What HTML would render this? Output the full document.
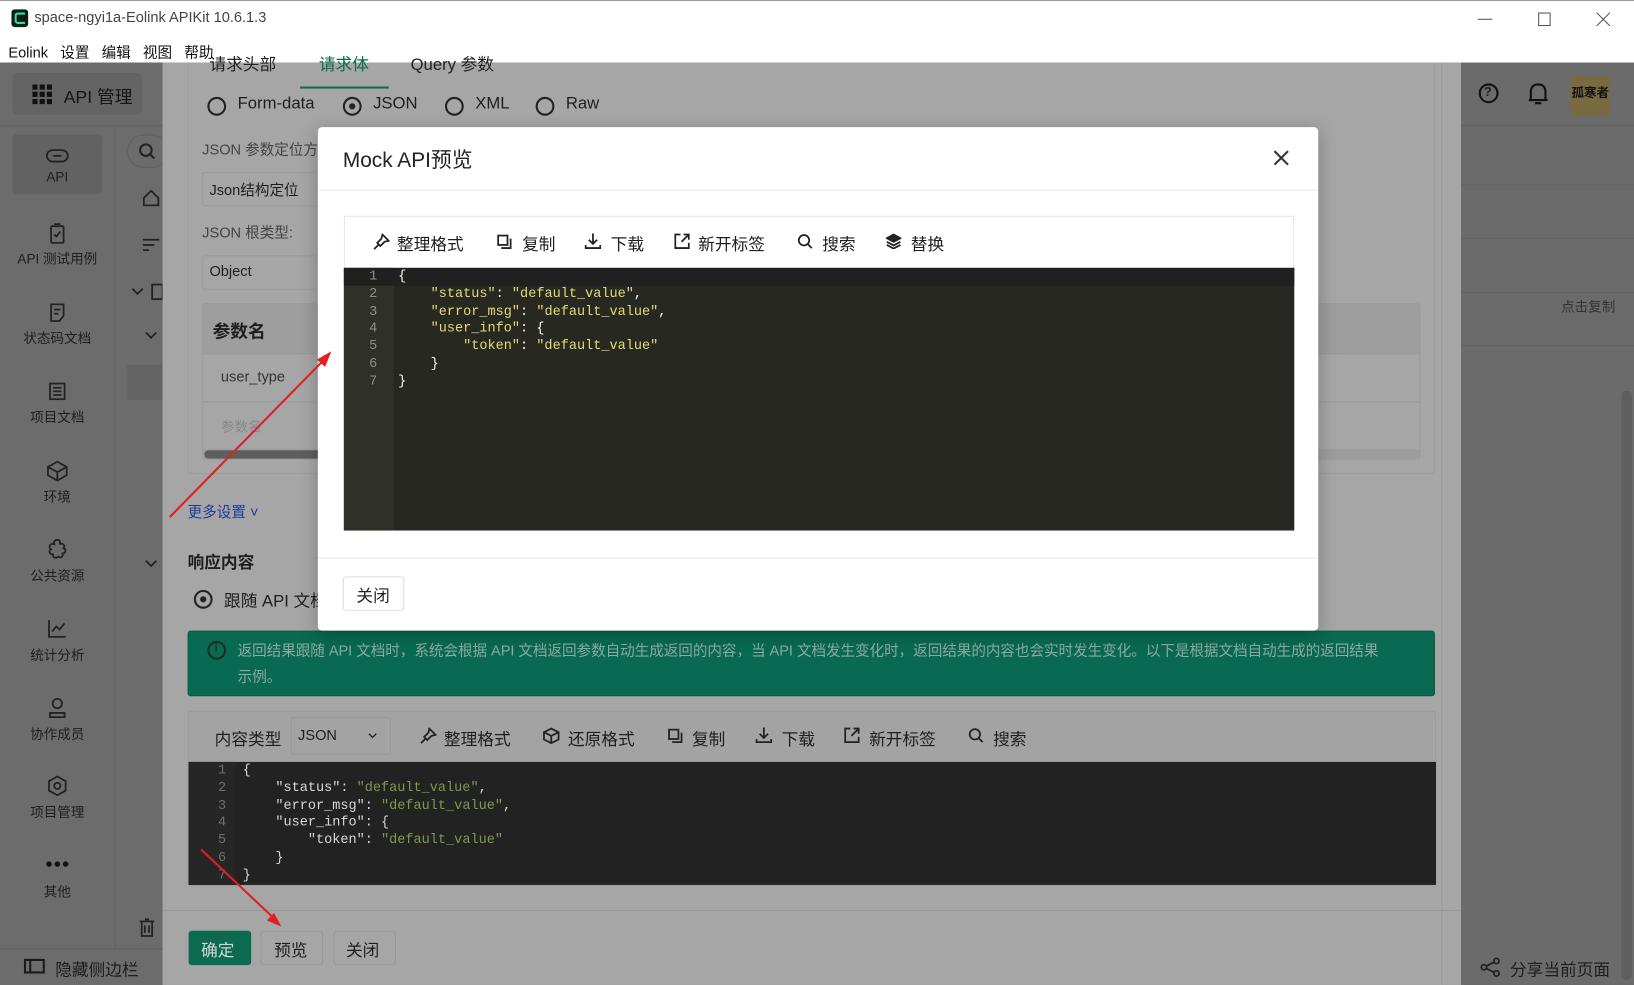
<!DOCTYPE html>
<html><head><meta charset="utf-8">
<style>
*{box-sizing:border-box;margin:0;padding:0}
html,body{width:1634px;height:985px;overflow:hidden;background:#6b6b6b}
#w{position:absolute;left:0;top:0;width:1568px;height:945px;transform:scale(1.0421,1.0423);transform-origin:0 0;font-family:"Liberation Sans","Noto Sans CJK SC",sans-serif;color:#1e1e1e;background:#6b6b6b}
.a{position:absolute}
.t{position:absolute;white-space:nowrap}
.mono{font-family:"Liberation Mono","DejaVu Sans Mono",monospace;font-size:13px;line-height:16.8px}
svg.i{position:absolute;fill:none;stroke:#222;stroke-width:1.7}
</style></head><body><div id="w">
<!-- title bar -->
<div class="a" style="left:0;top:0;width:1568px;height:60px;background:#fff;border-top:1px solid #999"></div>
<div class="a" style="left:11px;top:9px;width:16px;height:17px;border-radius:3px;background:#0c1f17"><div class="a" style="left:3px;top:3px;width:10px;height:11px;border:2px solid #2fe0a0;border-right:none;border-radius:3px 0 0 3px"></div></div>
<div class="t" style="left:33px;top:8px;font-size:14px;color:#444">space-ngyi1a-Eolink APIKit 10.6.1.3</div>
<div class="t" style="left:8px;top:40px;font-size:14px;color:#111">Eolink&nbsp;&nbsp; 设置&nbsp;&nbsp; 编辑&nbsp;&nbsp; 视图&nbsp;&nbsp; 帮助</div>
<div class="a" style="left:1418px;top:18px;width:14px;height:1px;background:#555"></div>
<div class="a" style="left:1476px;top:12px;width:12px;height:13px;border:1px solid #555"></div>
<svg class="i" style="left:1532px;top:12px" width="13" height="13"><path d="M0 0L13 13M13 0L0 13" stroke="#555" stroke-width="1"/></svg>

<!-- left sidebar -->
<div class="a" style="left:0;top:60px;width:156px;height:885px;background:#6c6c6c"></div>
<div class="a" style="left:110px;top:120px;width:1px;height:790px;background:#636363"></div>
<div class="a" style="left:0;top:120px;width:156px;height:1px;background:#626262"></div>
<div class="a" style="left:12px;top:70px;width:124px;height:40px;background:#646464;border-radius:4px"></div>
<svg class="i" style="left:31px;top:81px" width="19" height="19"><g fill="#111" stroke="none"><rect x="0" y="0" width="5" height="5"/><rect x="7" y="0" width="5" height="5"/><rect x="14" y="0" width="5" height="5"/><rect x="0" y="7" width="5" height="5"/><rect x="7" y="7" width="5" height="5"/><rect x="14" y="7" width="5" height="5"/><rect x="0" y="14" width="5" height="5"/><rect x="7" y="14" width="5" height="5"/><rect x="14" y="14" width="5" height="5"/></g></svg>
<div class="t" style="left:61px;top:79px;font-size:17px;color:#161616">API 管理</div>
<div class="a" style="left:12px;top:129px;width:86px;height:57px;background:#626262;border-radius:4px"></div>
<svg class="i" style="left:44px;top:142px" width="22" height="16"><rect x="1" y="2" width="20" height="11" rx="5.5"/><path d="M7 7.5H15"/></svg>
<div class="t" style="left:0;width:110px;text-align:center;top:162px;font-size:13px">API</div>
<svg class="i" style="left:47px;top:214px" width="16" height="20"><rect x="2" y="3" width="12" height="16" rx="1"/><path d="M5 1H11M5 11L7 13L11 8"/></svg>
<div class="t" style="left:0;width:110px;text-align:center;top:238px;font-size:13px">API 测试用例</div>
<svg class="i" style="left:47px;top:291px" width="16" height="18"><path d="M2 1H14V12L10 17H2Z M5 6H11M5 10H9"/></svg>
<div class="t" style="left:0;width:110px;text-align:center;top:314px;font-size:13px">状态码文档</div>
<svg class="i" style="left:47px;top:367px" width="16" height="17"><rect x="1" y="1" width="14" height="15"/><path d="M4 5H12M4 8.5H12M4 12H12"/></svg>
<div class="t" style="left:0;width:110px;text-align:center;top:390px;font-size:13px">项目文档</div>
<svg class="i" style="left:45px;top:442px" width="20" height="20"><path d="M10 1L19 6V14L10 19L1 14V6Z M1 6L10 11L19 6M10 11V19"/></svg>
<div class="t" style="left:0;width:110px;text-align:center;top:466px;font-size:13px">环境</div>
<svg class="i" style="left:45px;top:517px" width="20" height="20"><path d="M10 1C13 1 13 4 12 5C15 4 18 6 16 9C19 10 18 14 15 14C16 17 13 19 11 17C9 19 5 18 6 15C3 15 1 12 4 10C1 8 3 4 7 5C6 3 8 1 10 1Z"/></svg>
<div class="t" style="left:0;width:110px;text-align:center;top:542px;font-size:13px">公共资源</div>
<svg class="i" style="left:46px;top:594px" width="18" height="18"><path d="M1 1V17H17M4 12L8 7L11 10L16 4"/></svg>
<div class="t" style="left:0;width:110px;text-align:center;top:618px;font-size:13px">统计分析</div>
<svg class="i" style="left:46px;top:669px" width="18" height="20"><circle cx="9" cy="6" r="4.5"/><path d="M2 19V15H16V19Z"/></svg>
<div class="t" style="left:0;width:110px;text-align:center;top:694px;font-size:13px">协作成员</div>
<svg class="i" style="left:45px;top:744px" width="20" height="20"><path d="M10 1L18 5.5V14.5L10 19L2 14.5V5.5Z"/><circle cx="10" cy="10" r="3"/></svg>
<div class="t" style="left:0;width:110px;text-align:center;top:769px;font-size:13px">项目管理</div>
<svg class="i" style="left:44px;top:826px" width="22" height="6"><g fill="#111" stroke="none"><circle cx="3" cy="3" r="2.6"/><circle cx="11" cy="3" r="2.6"/><circle cx="19" cy="3" r="2.6"/></g></svg>
<div class="t" style="left:0;width:110px;text-align:center;top:845px;font-size:13px">其他</div>
<div class="a" style="left:122px;top:129px;width:40px;height:32px;border-radius:16px;border:1px solid #606060"></div>
<svg class="i" style="left:133px;top:137px" width="16" height="16"><circle cx="7" cy="7" r="5.5" stroke-width="2"/><path d="M11 11L15 15" stroke-width="2"/></svg>
<svg class="i" style="left:137px;top:182px" width="16" height="16"><path d="M1 8L8 1L15 8V15H1Z"/></svg>
<svg class="i" style="left:137px;top:228px" width="16" height="14"><path d="M0 2H16M0 7H11M0 12H6"/></svg>
<svg class="i" style="left:126px;top:272px" width="30" height="16"><path d="M1 5L6 10L11 5"/><rect x="20" y="1" width="10" height="14"/></svg>
<svg class="i" style="left:139px;top:318px" width="12" height="8"><path d="M1 1L6 6L11 1"/></svg>
<div class="a" style="left:122px;top:350px;width:34px;height:34px;background:#646464"></div>
<svg class="i" style="left:139px;top:537px" width="12" height="8"><path d="M1 1L6 6L11 1"/></svg>
<svg class="i" style="left:134px;top:881px" width="14" height="18"><path d="M0 3H14M5 1H9M2 3V17H12V3M5 7V14M9 7V14"/></svg>
<div class="a" style="left:0;top:910px;width:156px;height:1px;background:#606060"></div>
<div class="a" style="left:23px;top:920px;width:20px;height:14px;border:2px solid #1a1a1a"></div>
<div class="a" style="left:28px;top:920px;width:2px;height:14px;background:#1a1a1a"></div>
<div class="t" style="left:53px;top:917px;font-size:16px">隐藏侧边栏</div>

<!-- right area -->
<div class="a" style="left:1402px;top:120px;width:166px;height:1px;background:#626262"></div>
<div class="a" style="left:1402px;top:177px;width:166px;height:1px;background:#626262"></div>
<div class="a" style="left:1402px;top:228px;width:166px;height:1px;background:#626262"></div>
<div class="a" style="left:1402px;top:280px;width:166px;height:1px;background:#626262"></div>
<div class="a" style="left:1402px;top:331px;width:166px;height:1px;background:#626262"></div>
<div class="t" style="left:1498px;top:284px;font-size:13px;color:#333">点击复制</div>
<div class="a" style="left:1419px;top:80px;width:19px;height:19px;border:2px solid #111;border-radius:50%"></div>
<div class="t" style="left:1424px;top:81px;font-size:12px;font-weight:bold">?</div>
<svg class="i" style="left:1466px;top:78px" width="20" height="24"><path d="M3 18V10C3 5 6 3 10 3C14 3 17 5 17 10V18Z M1 18H19M7 21H13" stroke="#111" stroke-width="2"/></svg>
<div class="a" style="left:1507px;top:73px;width:38px;height:38px;background:#7a6a40"></div>
<div class="t" style="left:1508px;top:80px;font-size:12px;font-weight:bold;color:#111">孤寒者</div>
<div class="a" style="left:1556px;top:375px;width:10px;height:565px;background:#5e5e5e;border-radius:4px"></div>
<svg class="i" style="left:1420px;top:918px" width="20" height="20"><circle cx="16" cy="4" r="2.5"/><circle cx="4" cy="10" r="2.5"/><circle cx="16" cy="16" r="2.5"/><path d="M6 9L14 5M6 11L14 15"/></svg>
<div class="t" style="left:1449px;top:917px;font-size:16px">分享当前页面</div>

<!-- drawer -->
<div class="a" style="left:156px;top:60px;width:1246px;height:885px;background:#a6a6a6"></div>
<div class="a" style="left:1383px;top:60px;width:1px;height:885px;background:#9c9c9c"></div>
<div class="a" style="left:180px;top:60px;width:1197px;height:395px;border:1px solid #9c9c9c;border-top:none;border-radius:0 0 4px 4px"></div>
<div class="t" style="left:201px;top:48px;font-size:16px;color:#222">请求头部</div>
<div class="t" style="left:306px;top:48px;font-size:16px;color:#0b6b4f">请求体</div>
<div class="t" style="left:394px;top:48px;font-size:16px;color:#222">Query 参数</div>
<div class="a" style="left:288px;top:83px;width:85px;height:2px;background:#0b6b4f"></div>
<div class="a" style="left:199px;top:93px;width:18px;height:18px;border:2px solid #222;border-radius:50%"></div>
<div class="t" style="left:228px;top:91px;font-size:16px">Form-data</div>
<div class="a" style="left:329px;top:93px;width:18px;height:18px;border:2px solid #222;border-radius:50%"></div>
<div class="a" style="left:335px;top:99px;width:6px;height:6px;background:#222;border-radius:50%"></div>
<div class="t" style="left:358px;top:91px;font-size:16px">JSON</div>
<div class="a" style="left:427px;top:93px;width:18px;height:18px;border:2px solid #222;border-radius:50%"></div>
<div class="t" style="left:456px;top:91px;font-size:16px">XML</div>
<div class="a" style="left:514px;top:93px;width:18px;height:18px;border:2px solid #222;border-radius:50%"></div>
<div class="t" style="left:543px;top:91px;font-size:16px">Raw</div>
<div class="t" style="left:194px;top:133px;font-size:14px;color:#444">JSON 参数定位方</div>
<div class="a" style="left:194px;top:165px;width:130px;height:33px;border:1px solid #9a9a9a;border-radius:3px"></div>
<div class="t" style="left:201px;top:172px;font-size:14px">Json结构定位</div>
<div class="t" style="left:194px;top:213px;font-size:14px;color:#444">JSON 根类型:</div>
<div class="a" style="left:194px;top:245px;width:130px;height:33px;border:1px solid #9a9a9a;border-radius:3px"></div>
<div class="t" style="left:201px;top:252px;font-size:14px">Object</div>
<div class="a" style="left:194px;top:291px;width:1169px;height:150px;border:1px solid #9a9a9a;border-radius:3px"></div>
<div class="a" style="left:195px;top:292px;width:1167px;height:47px;background:#9e9e9e"></div>
<div class="a" style="left:195px;top:339px;width:1167px;height:1px;background:#999"></div>
<div class="a" style="left:195px;top:385px;width:1167px;height:1px;background:#999"></div>
<div class="t" style="left:204px;top:304px;font-size:17px;font-weight:bold">参数名</div>
<div class="t" style="left:212px;top:353px;font-size:14px;color:#333">user_type</div>
<div class="t" style="left:212px;top:399px;font-size:13px;color:#888">参数名</div>
<div class="a" style="left:195px;top:431px;width:1167px;height:10px;background:#9d9d9d"></div>
<div class="a" style="left:196px;top:432px;width:114px;height:8px;background:#5e5e5e;border-radius:4px"></div>
<div class="t" style="left:180px;top:481px;font-size:14px;color:#1b3a9a">更多设置 ˅</div>
<div class="t" style="left:180px;top:526px;font-size:16px;font-weight:bold">响应内容</div>
<div class="a" style="left:186px;top:566px;width:18px;height:18px;border:2px solid #222;border-radius:50%"></div>
<div class="a" style="left:192px;top:572px;width:6px;height:6px;background:#222;border-radius:50%"></div>
<div class="t" style="left:215px;top:563px;font-size:16px">跟随 API 文档</div>
<div class="a" style="left:180px;top:605px;width:1197px;height:63px;background:#086a50;border:1px solid #075a44;border-radius:3px"></div>
<div class="a" style="left:199px;top:615px;width:18px;height:18px;border:2px solid #1d2e28;border-radius:50%"></div>
<div class="t" style="left:206px;top:616px;font-size:11px;font-weight:bold;color:#1d2e28">i</div>
<div class="t" style="left:228px;top:614px;font-size:14px;color:#8eaaa2;letter-spacing:-0.05px">返回结果跟随 API 文档时，系统会根据 API 文档返回参数自动生成返回的内容，当 API 文档发生变化时，返回结果的内容也会实时发生变化。以下是根据文档自动生成的返回结果</div>
<div class="t" style="left:228px;top:639px;font-size:14px;color:#8eaaa2">示例。</div>
<div class="a" style="left:180px;top:682px;width:1198px;height:168px;border:1px solid #9c9c9c;border-radius:3px;background:#a3a3a3"></div>
<div class="t" style="left:206px;top:696px;font-size:16px">内容类型</div>
<div class="a" style="left:279px;top:688px;width:96px;height:36px;border:1px solid #999;border-radius:3px"></div>
<div class="t" style="left:286px;top:697px;font-size:14px">JSON</div>
<svg class="i" style="left:353px;top:703px" width="9" height="6"><path d="M1 1L4.5 4.5L8 1" stroke-width="1.3"/></svg>
<svg class="i" style="left:403px;top:698px" width="16" height="16"><path d="M9 1L15 7L11 8L7 12L4 9L8 5Z M5 11L1 15"/></svg>
<div class="t" style="left:426px;top:696px;font-size:16px">整理格式</div>
<svg class="i" style="left:521px;top:698px" width="16" height="16"><path d="M8 1L15 4.5V11.5L8 15L1 11.5V4.5Z M1 4.5L8 8L15 4.5M8 8V15"/></svg>
<div class="t" style="left:545px;top:696px;font-size:16px">还原格式</div>
<svg class="i" style="left:641px;top:699px" width="14" height="14"><rect x="1" y="1" width="9" height="9"/><path d="M4 13H13V4"/></svg>
<div class="t" style="left:664px;top:696px;font-size:16px">复制</div>
<svg class="i" style="left:725px;top:697px" width="16" height="16"><path d="M8 1V11M4 7L8 11L12 7M1 12V15H15V12"/></svg>
<div class="t" style="left:750px;top:696px;font-size:16px">下载</div>
<svg class="i" style="left:810px;top:698px" width="15" height="15"><path d="M6 1H1V14H14V9M9 1H14V6M14 1L7 8"/></svg>
<div class="t" style="left:834px;top:696px;font-size:16px">新开标签</div>
<svg class="i" style="left:929px;top:698px" width="15" height="15"><circle cx="6.5" cy="6.5" r="5"/><path d="M10 10L14 14"/></svg>
<div class="t" style="left:953px;top:696px;font-size:16px">搜索</div>
<div class="a" style="left:181px;top:731px;width:1197px;height:118px;background:#222"></div>
<div class="a" style="left:181px;top:731px;width:45px;height:118px;background:#262626"></div>
<div class="a mono" style="left:181px;top:731px;width:36px;text-align:right;color:#6e6e6e">1<br>2<br>3<br>4<br>5<br>6<br>7</div>
<div class="a mono" style="left:233px;top:731px;color:#d8d8d8;white-space:pre">{
    "status": <span style="color:#7f9a4a">"default_value"</span>,
    "error_msg": <span style="color:#7f9a4a">"default_value"</span>,
    "user_info": {
        "token": <span style="color:#7f9a4a">"default_value"</span>
    }
}</div>
<div class="a" style="left:156px;top:873px;width:1246px;height:1px;background:#989898"></div>
<div class="a" style="left:181px;top:893px;width:60px;height:33px;background:#0b6a4f;border-radius:3px"></div>
<div class="t" style="left:193px;top:898px;font-size:16px;color:#cfd8d4">确定</div>
<div class="a" style="left:250px;top:893px;width:60px;height:33px;border:1px solid #999;border-radius:3px"></div>
<div class="t" style="left:263px;top:898px;font-size:16px">预览</div>
<div class="a" style="left:320px;top:893px;width:60px;height:33px;border:1px solid #999;border-radius:3px"></div>
<div class="t" style="left:332px;top:898px;font-size:16px">关闭</div>

<!-- modal -->
<div class="a" style="left:305px;top:122px;width:960px;height:483px;background:#fff;border-radius:4px;box-shadow:0 4px 18px rgba(0,0,0,.25)"></div>
<div class="t" style="left:329px;top:137px;font-size:20px;color:#222">Mock API预览</div>
<svg class="i" style="left:1222px;top:144px" width="15" height="15"><path d="M1 1L14 14M14 1L1 14" stroke="#333" stroke-width="2"/></svg>
<div class="a" style="left:305px;top:182px;width:960px;height:1px;background:#e6e6e6"></div>
<div class="a" style="left:330px;top:207px;width:912px;height:50px;border:1px solid #e6e6e6;border-bottom:none"></div>
<svg class="i" style="left:358px;top:224px" width="16" height="16"><path d="M9 1L15 7L11 8L7 12L4 9L8 5Z M5 11L1 15"/></svg>
<div class="t" style="left:381px;top:221px;font-size:16px">整理格式</div>
<svg class="i" style="left:477px;top:225px" width="14" height="14"><rect x="1" y="1" width="9" height="9"/><path d="M4 13H13V4"/></svg>
<div class="t" style="left:501px;top:221px;font-size:16px">复制</div>
<svg class="i" style="left:561px;top:223px" width="16" height="16"><path d="M8 1V11M4 7L8 11L12 7M1 12V15H15V12"/></svg>
<div class="t" style="left:586px;top:221px;font-size:16px">下载</div>
<svg class="i" style="left:647px;top:224px" width="15" height="15"><path d="M6 1H1V14H14V9M9 1H14V6M14 1L7 8"/></svg>
<div class="t" style="left:670px;top:221px;font-size:16px">新开标签</div>
<svg class="i" style="left:765px;top:224px" width="15" height="15"><circle cx="6.5" cy="6.5" r="5"/><path d="M10 10L14 14"/></svg>
<div class="t" style="left:789px;top:221px;font-size:16px">搜索</div>
<svg class="i" style="left:850px;top:224px" width="15" height="15"><path d="M7.5 1L14 4.5L7.5 8L1 4.5Z" fill="#222"/><path d="M1 8L7.5 11.5L14 8M1 11L7.5 14.5L14 11"/></svg>
<div class="t" style="left:874px;top:221px;font-size:16px">替换</div>
<div class="a" style="left:330px;top:257px;width:912px;height:252px;background:#272822"></div>
<div class="a" style="left:330px;top:257px;width:48px;height:252px;background:#2f3129"></div>
<div class="a" style="left:330px;top:257px;width:912px;height:17px;background:#202020"></div>
<div class="a mono" style="left:330px;top:257px;width:32px;text-align:right;color:#8f908a">1<br>2<br>3<br>4<br>5<br>6<br>7</div>
<div class="a mono" style="left:382px;top:257px;color:#f8f8f2;white-space:pre"><span>{</span>
    <span style="color:#e6db74">"status"</span>: <span style="color:#e6db74">"default_value"</span>,
    <span style="color:#e6db74">"error_msg"</span>: <span style="color:#e6db74">"default_value"</span>,
    <span style="color:#e6db74">"user_info"</span>: {
        <span style="color:#e6db74">"token"</span>: <span style="color:#e6db74">"default_value"</span>
    }
}</div>
<div class="a" style="left:305px;top:535px;width:960px;height:1px;background:#e6e6e6"></div>
<div class="a" style="left:329px;top:553px;width:59px;height:33px;border:1px solid #ddd;border-radius:3px"></div>
<div class="t" style="left:342px;top:558px;font-size:16px;color:#222">关闭</div>

<!-- red arrows -->
<svg class="a" style="left:0;top:0" width="1568" height="945">
<line x1="163" y1="496" x2="314" y2="342" stroke="#e02020" stroke-width="2"/>
<polygon points="318,337 304,345 312,352" fill="#e02020"/>
<line x1="193" y1="815" x2="266" y2="884" stroke="#e02020" stroke-width="2"/>
<polygon points="270,889 256,883 263,876" fill="#e02020"/>
</svg>
</div></body></html>
